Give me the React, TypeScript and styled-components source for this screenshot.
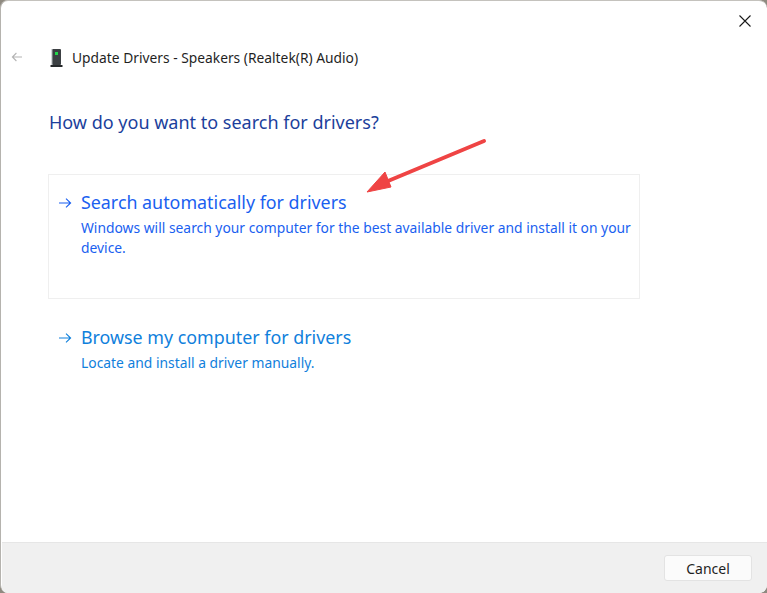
import React from "react";
import styled, { createGlobalStyle } from "styled-components";

const GlobalStyle = createGlobalStyle`
  html, body {
    margin: 0;
    padding: 0;
    width: 767px;
    height: 593px;
    overflow: hidden;
    background: #8f8a80;
  }
  * { box-sizing: border-box; }
`;

const Window = styled.div`
  position: relative;
  width: 767px;
  height: 593px;
  padding-left: 1px;
  display: flex;
  flex-direction: column;
  background: #ffffff;
  border-radius: 8px;
  border-left: 1px solid #b5b3ae;
  border-top: 1px solid #c4c2bd;
  overflow: hidden;
  font-family: "Noto Sans", "Open Sans", sans-serif;
`;

const CloseButton = styled.button`
  position: absolute;
  top: 13px;
  right: 15px;
  width: 14px;
  height: 14px;
  padding: 1px;
  border: 0;
  background: none;
  display: flex;
`;

const Main = styled.div`
  flex: 1;
  display: flex;
  flex-direction: column;
  padding-top: 46px;
`;

const Header = styled.div`
  display: flex;
  align-items: center;
  height: 21px;
  padding-left: 9px;
`;

const BackArrow = styled.div`
  width: 39px;
  padding-bottom: 2px;
  display: flex;
`;

const DeviceIcon = styled.div`
  width: 22px;
  display: flex;
`;

const Title = styled.div`
  font-size: 13.8px;
  color: #1f1f1f;
  white-space: nowrap;
`;

const Heading = styled.h1`
  margin: 41px 0 0 47px;
  font-size: 18px;
  line-height: 26px;
  font-weight: 400;
  color: #1c3f9c;
  white-space: nowrap;
`;

const Options = styled.div`
  margin: 39px 0 0 46px;
  width: 592px;
  display: flex;
  flex-direction: column;
`;

const Option = styled.div<{ $active?: boolean }>`
  height: 125px;
  margin-top: ${(p) => (p.$active ? "0" : "10px")};
  padding: 15px 0 0 9px;
  display: flex;
  gap: 9px;
  border: 1px solid ${(p) => (p.$active ? "#efefef" : "transparent")};
  color: ${(p) => (p.$active ? "#1a5ff0" : "#1080dc")};
`;

const OptionArrow = styled.div`
  width: 14px;
  padding-top: 2px;
  flex-shrink: 0;
`;

const OptionBody = styled.div`
  flex: 1;
  min-width: 0;
`;

const OptionTitle = styled.div`
  font-size: 17.85px;
  line-height: 25px;
  white-space: nowrap;
`;

const OptionText = styled.div`
  margin-top: 3px;
  font-size: 13.85px;
  line-height: 20px;
`;

const Footer = styled.div`
  height: 51px;
  flex-shrink: 0;
  padding: 0 15px 0 0;
  display: flex;
  align-items: center;
  justify-content: flex-end;
  background: #f0f0f0;
  border-top: 1px solid #e6e6e6;
`;

const CancelButton = styled.button`
  width: 88px;
  height: 26px;
  padding: 0;
  border: 1px solid #e3e3e3;
  border-radius: 3px;
  background: #fbfbfb;
  font-family: inherit;
  font-size: 14px;
  color: #1f1f1f;
`;

const PointerArrow = styled.svg`
  position: absolute;
  left: -1px;
  top: -1px;
  pointer-events: none;
`;

const RightArrow = () => (
  <svg width="14" height="12" viewBox="0 0 14 12" fill="none" stroke="currentColor" strokeWidth="1.1">
    <path d="M1 6h11.5M8 1.6 12.6 6 8 10.4" />
  </svg>
);

const App = () => (
  <>
    <GlobalStyle />
    <Window>
      <CloseButton aria-label="Close">
        <svg width="12" height="12" viewBox="0 0 12 12" fill="none" stroke="#1a1a1a" strokeWidth="1.1">
          <path d="M.5.5l11 11M11.5.5l-11 11" />
        </svg>
      </CloseButton>
      <Main>
        <Header>
          <BackArrow>
            <svg width="12" height="10" viewBox="0 0 12 10" fill="none" stroke="#b4b4b4" strokeWidth="1.1">
              <path d="M11 5H1.5M5.4 1 1.4 5l4 4" />
            </svg>
          </BackArrow>
          <DeviceIcon>
            <svg width="13" height="18" viewBox="0 0 13 18">
              <rect x="2" y="0" width="9" height="16" rx="1" fill="#3c4043" />
              <rect x="0.5" y="16" width="12" height="2" fill="#26292b" />
              <rect x="1.6" y="0" width="1" height="16" fill="#9aa0a3" />
              <rect x="5" y="3" width="3" height="3" fill="#22d84a" />
            </svg>
          </DeviceIcon>
          <Title>Update Drivers - Speakers (Realtek(R) Audio)</Title>
        </Header>
        <Heading>How do you want to search for drivers?</Heading>
        <Options>
          <Option $active>
            <OptionArrow><RightArrow /></OptionArrow>
            <OptionBody>
              <OptionTitle>Search automatically for drivers</OptionTitle>
              <OptionText>
                Windows will search your computer for the best available driver and install it on your device.
              </OptionText>
            </OptionBody>
          </Option>
          <Option>
            <OptionArrow><RightArrow /></OptionArrow>
            <OptionBody>
              <OptionTitle>Browse my computer for drivers</OptionTitle>
              <OptionText>Locate and install a driver manually.</OptionText>
            </OptionBody>
          </Option>
        </Options>
      </Main>
      <Footer>
        <CancelButton>Cancel</CancelButton>
      </Footer>
      <PointerArrow width="767" height="593" viewBox="0 0 767 593">
        <path d="M484 141 388 181" stroke="#ef4444" strokeWidth="4" strokeLinecap="round" fill="none" />
        <path d="M367 192 385 172 391 187Z" fill="#ef4444" stroke="#ef4444" strokeWidth="1" />
      </PointerArrow>
    </Window>
  </>
);

export default App;
